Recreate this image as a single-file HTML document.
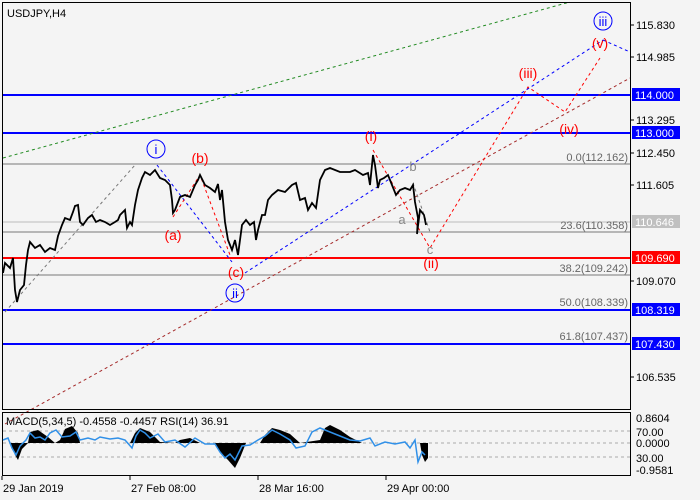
<!DOCTYPE html><html><head><style>body{margin:0;background:#f4f4f4}svg{display:block}text{font-family:"Liberation Sans",sans-serif}</style></head><body>
<svg width="700" height="500" xmlns="http://www.w3.org/2000/svg">
<rect width="700" height="500" fill="#f4f4f4"/>
<g font-size="11" fill="#000">
<text x="7" y="17">USDJPY,H4</text>
</g>
<line x1="3" y1="164" x2="630" y2="164" stroke="#777"/>
<line x1="3" y1="222" x2="630" y2="222" stroke="#bbb"/>
<line x1="3" y1="232" x2="630" y2="232" stroke="#777"/>
<line x1="3" y1="275" x2="630" y2="275" stroke="#777"/>
<line x1="3" y1="95" x2="630" y2="95" stroke="#0000ff" stroke-width="2"/>
<line x1="3" y1="133" x2="630" y2="133" stroke="#0000ff" stroke-width="2"/>
<line x1="3" y1="310" x2="630" y2="310" stroke="#0000ff" stroke-width="2"/>
<line x1="3" y1="344" x2="630" y2="344" stroke="#0000ff" stroke-width="2"/>
<line x1="3" y1="258" x2="630" y2="258" stroke="#ff0000" stroke-width="2"/>
<g font-size="11" fill="#666" text-anchor="end">
<text x="628" y="161">0.0(112.162)</text>
<text x="628" y="229">23.6(110.358)</text>
<text x="628" y="272">38.2(109.242)</text>
<text x="628" y="306">50.0(108.339)</text>
<text x="628" y="340">61.8(107.437)</text>
</g>
<g fill="none" stroke-dasharray="3,3">
<line x1="3" y1="158" x2="570" y2="2" stroke="#228b22"/>
<line x1="245" y1="273" x2="603" y2="40" stroke="#0000ff"/>
<line x1="603" y1="40" x2="630" y2="52" stroke="#0000ff"/>
<line x1="5" y1="424" x2="630" y2="78" stroke="#a52a2a"/>
<line x1="157" y1="165" x2="232" y2="262" stroke="#0000ff"/>
<line x1="5" y1="312" x2="135" y2="165" stroke="#777"/>
<polyline points="173,217 200,175 230,255" stroke="#ff0000"/>
<polyline points="373,150 430,248 528,87 565,112 600,58" stroke="#ff0000"/>
<polyline points="413,183 430,232" stroke="#777"/>
</g>
<polyline fill="none" stroke="#000" stroke-width="1.8" points="3,273 5,263 10,268 13,258 15,290 17,302 20,290 24,285 26,265 28,250 30,242 35,248 40,245 45,252 50,248 55,250 58,236 62,225 65,218 70,220 73,212 75,206 78,205 80,222 83,225 88,218 92,215 96,222 100,220 105,222 110,225 115,222 118,220 120,215 125,210 127,228 130,222 132,225 135,205 138,190 142,178 145,172 150,175 155,170 160,178 165,180 170,185 172,200 173,213 175,210 180,197 185,195 190,197 195,185 198,180 200,175 205,185 210,188 215,192 218,184 220,200 222,190 225,222 228,240 232,250 235,240 238,255 242,225 246,220 250,225 254,222 256,240 258,230 262,215 265,215 268,200 272,195 278,190 285,192 292,185 296,183 300,200 305,198 308,210 312,203 316,208 320,180 325,170 330,168 340,172 350,172 355,170 363,175 368,173 370,185 373,155 375,165 378,188 380,180 384,178 388,175 392,185 396,195 400,190 405,188 410,190 413,185 415,202 418,218 417,234 420,210 424,215 426,225"/>
<g font-size="14" fill="#ff0000" text-anchor="middle">
<text x="200" y="163">(b)</text>
<text x="173" y="240">(a)</text>
<text x="236" y="277">(c)</text>
<text x="371" y="141">(i)</text>
<text x="431" y="268">(ii)</text>
<text x="528" y="78">(iii)</text>
<text x="569" y="134">(iv)</text>
<text x="600" y="48">(v)</text>
</g>
<g font-size="13" fill="#888" text-anchor="middle">
<text x="413" y="171">b</text><text x="402" y="224">a</text><text x="430" y="254">c</text>
</g>
<g fill="none" stroke="#0000ff"><circle cx="156" cy="149" r="9"/><circle cx="235" cy="293" r="9"/><circle cx="603" cy="21" r="9"/></g>
<g font-size="13" fill="#0000ff" text-anchor="middle">
<text x="156" y="154">i</text><text x="235" y="298">ii</text><text x="603" y="26">iii</text>
</g>
<rect x="2.5" y="2.5" width="628" height="407" fill="none" stroke="#000"/>
<rect x="2.5" y="412.5" width="628" height="63" fill="none" stroke="#000"/>
<g font-size="11" fill="#000">
<text x="636" y="29">115.830</text>
<text x="636" y="61">114.985</text>
<text x="636" y="124">113.295</text>
<text x="636" y="157">112.450</text>
<text x="636" y="189">111.605</text>
<text x="636" y="285">109.070</text>
<text x="636" y="381">106.535</text>
</g>
<g stroke="#000"><line x1="630" y1="25" x2="634" y2="25"/><line x1="630" y1="57" x2="634" y2="57"/><line x1="630" y1="120" x2="634" y2="120"/><line x1="630" y1="153" x2="634" y2="153"/><line x1="630" y1="185" x2="634" y2="185"/><line x1="630" y1="281" x2="634" y2="281"/><line x1="630" y1="377" x2="634" y2="377"/></g>
<g font-size="11" fill="#fff">
<rect x="632" y="88" width="48" height="13" fill="#0000ff"/><text x="635" y="99">114.000</text>
<rect x="632" y="126" width="48" height="13" fill="#0000ff"/><text x="635" y="137">113.000</text>
<rect x="632" y="215" width="48" height="13" fill="#c0c0c0"/><text x="635" y="226">110.646</text>
<rect x="632" y="251" width="48" height="13" fill="#ff0000"/><text x="635" y="262">109.690</text>
<rect x="632" y="303" width="48" height="13" fill="#0000ff"/><text x="635" y="314">108.319</text>
<rect x="632" y="337" width="48" height="13" fill="#0000ff"/><text x="635" y="348">107.430</text>
</g>
<g stroke="#aaa" stroke-dasharray="3,3"><line x1="3" y1="431" x2="630" y2="431"/><line x1="3" y1="443" x2="630" y2="443"/><line x1="3" y1="457" x2="630" y2="457"/></g>
<polygon fill="#000" points="3,443 10,443 15,455 18,460 22,449 28,443 30,432 38,430 48,437 55,443 60,440 65,429 72,426 78,433 80,443 130,443 135,433 140,428 150,432 160,442 175,443 180,440 190,438 200,443 215,443 220,452 228,460 235,468 240,458 246,443 260,443 265,435 272,428 280,430 290,434 300,443 320,440 325,428 330,425 340,430 350,437 362,443 420,443 422,455 425,462 428,458 428,443 3,443"/>
<polyline fill="none" stroke="#3090e8" stroke-width="1.5" points="3,440 8,438 12,448 16,455 20,446 26,440 30,433 35,438 40,437 45,440 50,433 56,430 62,437 70,436 76,432 80,440 88,438 95,440 100,437 110,439 118,438 125,440 132,448 136,436 140,430 145,433 150,438 158,434 165,442 175,440 185,447 195,438 205,444 215,444 220,452 225,458 230,454 235,460 242,446 250,445 258,440 265,436 272,430 280,434 290,440 296,448 305,446 312,432 320,428 330,432 340,436 350,440 360,441 370,438 375,446 385,442 395,444 405,442 410,448 415,440 418,462 422,452 425,455"/>
<g font-size="11" fill="#000"><text x="6" y="425">MACD(5,34,5) -0.4558 -0.4457 RSI(14) 36.91</text></g>
<g font-size="11" fill="#000">
<text x="636" y="422">0.8604</text><text x="636" y="436">70.00</text><text x="636" y="447">0.0000</text><text x="636" y="462">30.00</text><text x="636" y="474">-0.9581</text>
</g>
<g stroke="#000"><line x1="2" y1="476" x2="2" y2="480"/><line x1="130" y1="476" x2="130" y2="480"/><line x1="258" y1="476" x2="258" y2="480"/><line x1="386" y1="476" x2="386" y2="480"/></g>
<g font-size="11" fill="#000">
<text x="3" y="492">29 Jan 2019</text><text x="131" y="492">27 Feb 08:00</text><text x="259" y="492">28 Mar 16:00</text><text x="387" y="492">29 Apr 00:00</text>
</g>
</svg></body></html>
